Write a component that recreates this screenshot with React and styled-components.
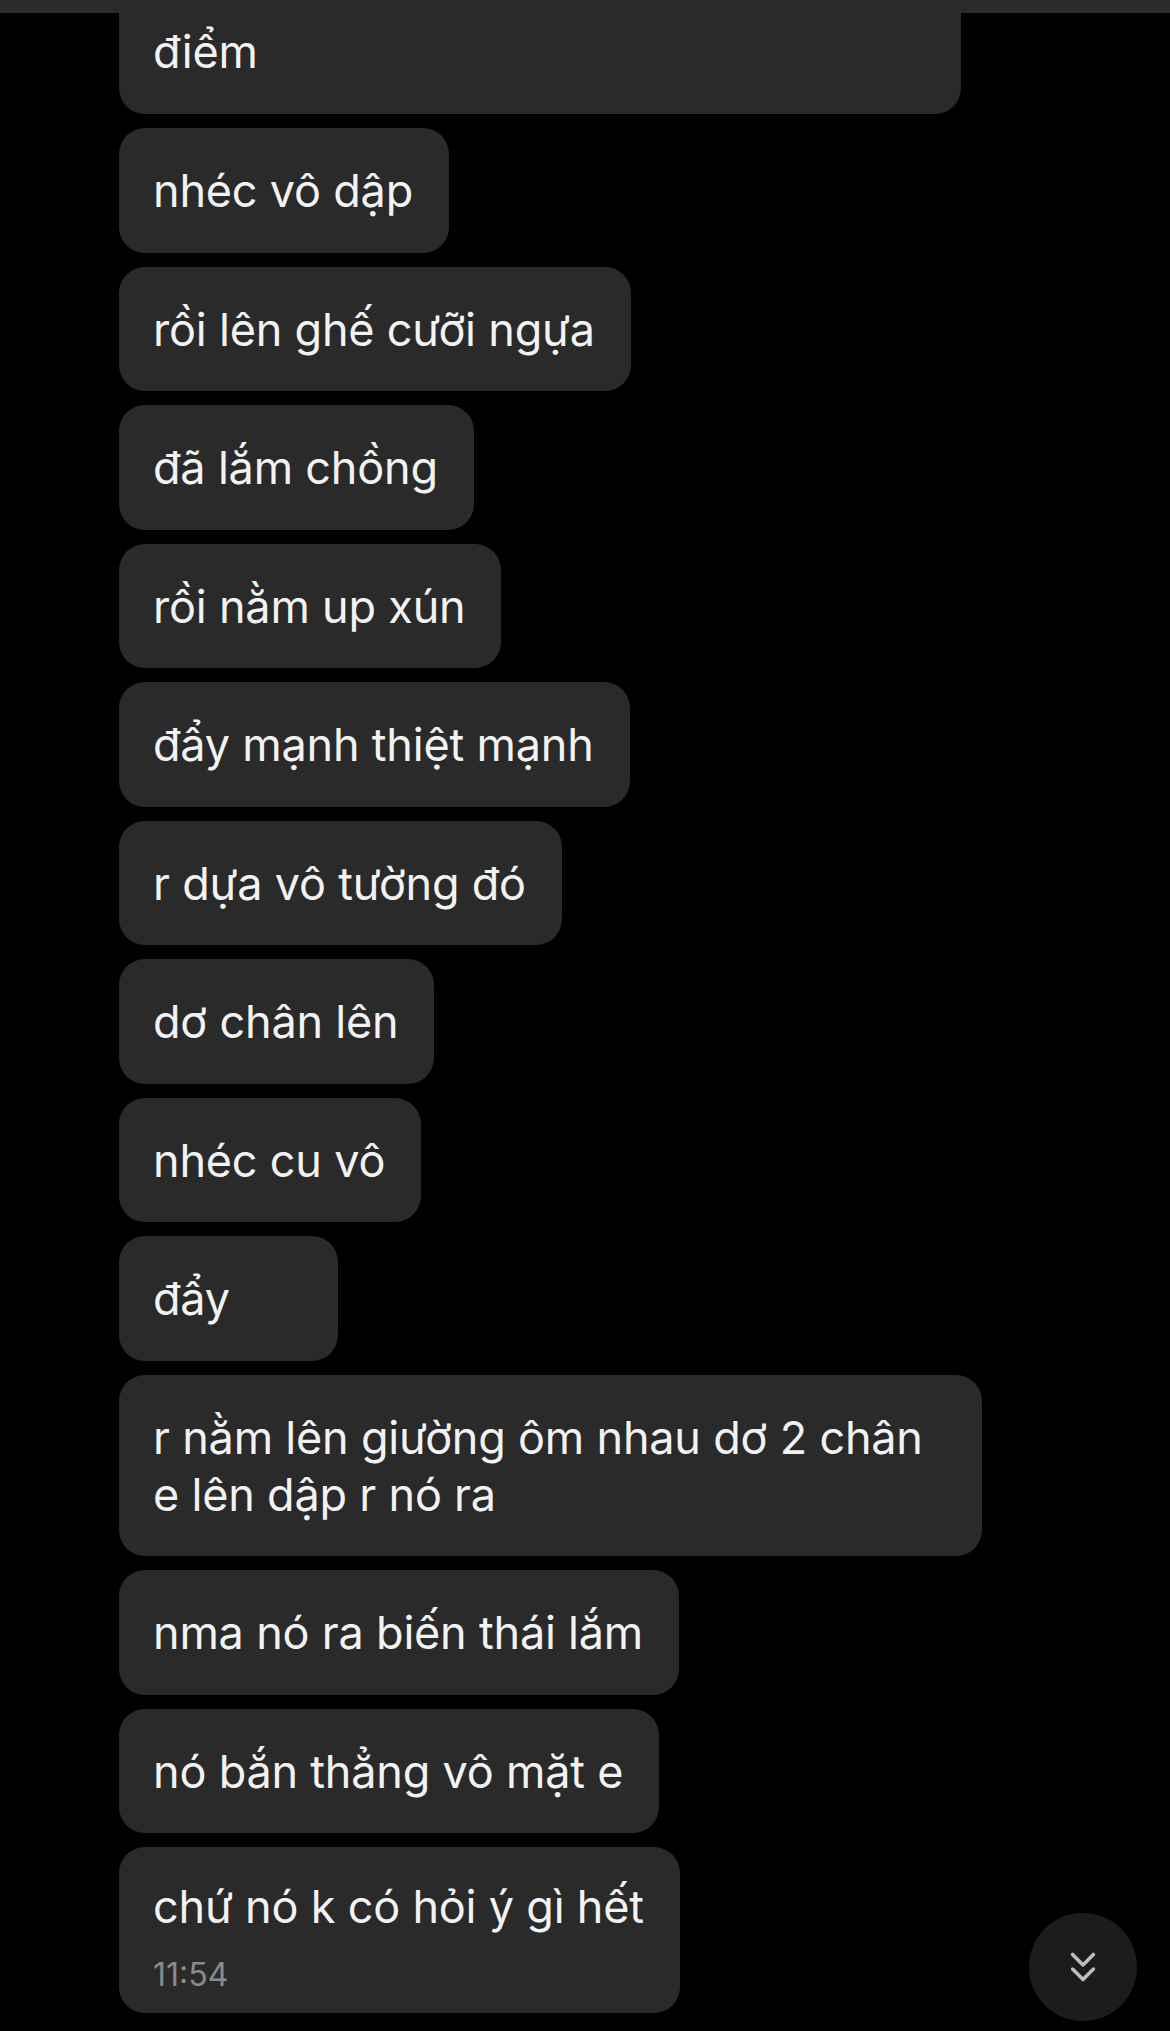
import React from "react";
import styled, { createGlobalStyle } from "styled-components";
import { ChevronsDown } from "lucide-react";

const messages = [
  "nhéc vô dập",
  "rồi lên ghế cưỡi ngựa",
  "đã lắm chồng",
  "rồi nằm up xún",
  "đẩy mạnh thiệt mạnh",
  "r dựa vô tường đó",
  "dơ chân lên",
  "nhéc cu vô",
  "đẩy",
  "r nằm lên giường ôm nhau dơ 2 chân e lên dập r nó ra",
  "nma nó ra biến thái lắm",
  "nó bắn thẳng vô mặt e",
];

const App = () => (
  <Screen>
    <Global />
    <TopBar />
    <Thread>
      <Bubble $cut>điểm</Bubble>
      {messages.map((m) => (
        <Bubble key={m} $wrap={m.length > 30}>
          {m}
        </Bubble>
      ))}
      <Bubble $last>
        chứ nó k có hỏi ý gì hết
        <Time>11:54</Time>
      </Bubble>
    </Thread>
    <ScrollDown>
      <ChevronsDown size={50} strokeWidth={1.7} />
    </ScrollDown>
  </Screen>
);
export default App;

const Global = createGlobalStyle`
  body {
    margin: 0;
    background: #000;
  }
`;

const Screen = styled.div`
  position: relative;
  width: 1170px;
  height: 2031px;
  overflow: hidden;
  background: #000;
  font-family: Inter, "Liberation Sans", sans-serif;
  color: #f2f2f2;
`;

const TopBar = styled.div`
  height: 13px;
  background: #2b2b2b;
`;

const Thread = styled.div`
  display: flex;
  flex-direction: column;
  align-items: flex-start;
  gap: 14px;
  padding-left: 119px;
`;

const Bubble = styled.div`
  box-sizing: border-box;
  min-width: 219px;
  background: #2a2a2a;
  border-radius: ${(p) => (p.$cut ? "0 0 26px 26px" : "26px")};
  padding: ${(p) =>
    p.$cut
      ? "10px 34px 34px"
      : p.$last
      ? "31px 36px 18px 34px"
      : "34px 36px 33.5px 34px"};
  width: ${(p) => (p.$cut ? "842px" : p.$wrap ? "863px" : "auto")};
  font-size: 45px;
  line-height: 57px;
  letter-spacing: -0.2px;
  display: flex;
  flex-direction: column;
`;

const Time = styled.span`
  font-size: 32px;
  line-height: 40px;
  margin-top: 20px;
  color: #8a8a8a;
  letter-spacing: 0;
`;

const ScrollDown = styled.div`
  position: absolute;
  left: 1029px;
  top: 1913px;
  width: 108px;
  height: 108px;
  border-radius: 50%;
  background: #1c1c1c;
  display: flex;
  align-items: center;
  justify-content: center;
  color: #bdbdbd;
`;
